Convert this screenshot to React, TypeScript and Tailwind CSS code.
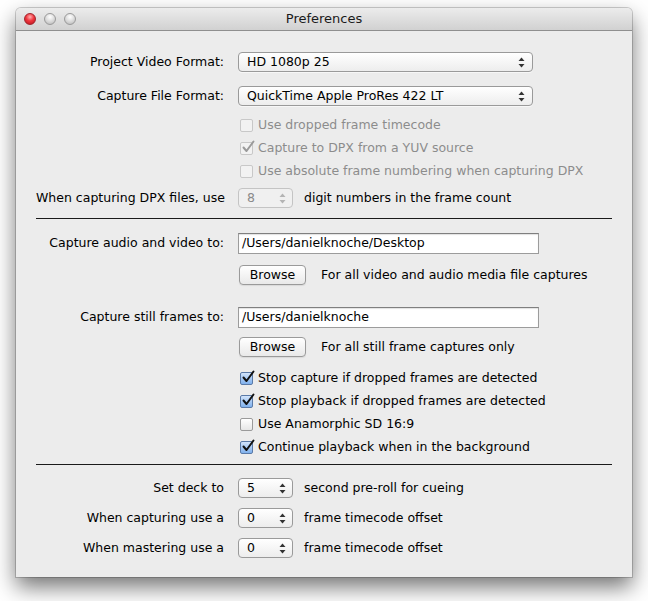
import React from "react";

const font = { fontFamily: '"Lucida Grande", "DejaVu Sans", sans-serif' };

function Arrows({ disabled }: { disabled?: boolean }) {
  const c = disabled ? "#b4b4b4" : "#333";
  return (
    <svg width="7" height="11" viewBox="0 0 7 11" className="shrink-0">
      <path d="M3.5 0.5 L6.5 4 L0.5 4 Z" fill={c} />
      <path d="M3.5 10.5 L6.5 7 L0.5 7 Z" fill={c} />
    </svg>
  );
}

function Popup({ value }: { value: string }) {
  return (
    <div className="flex h-[20px] w-[295px] items-center justify-between rounded-[4px] border border-[#9a9a9a] bg-gradient-to-b from-[#ffffff] to-[#ededed] pl-[8px] pr-[7px] text-black shadow-[0_1px_0_rgba(255,255,255,0.6)]">
      <span>{value}</span>
      <Arrows />
    </div>
  );
}

function Stepper({ value, disabled }: { value: string; disabled?: boolean }) {
  return (
    <div
      className={`flex h-[20px] w-[55px] shrink-0 items-center justify-between rounded-[4px] border pl-[8px] pr-[6px] ${
        disabled
          ? "border-[#c4c4c4] bg-[#f0f0f0] text-[#8a8a8a]"
          : "border-[#9a9a9a] bg-gradient-to-b from-[#ffffff] to-[#ededed] text-black"
      }`}
    >
      <span>{value}</span>
      <Arrows disabled={disabled} />
    </div>
  );
}

function Check({ checked, disabled }: { checked?: boolean; disabled?: boolean }) {
  const box = disabled
    ? "border-[#c8c8c8] bg-[#f2f2f2]"
    : checked
    ? "border-[#5a7aa8] bg-gradient-to-b from-[#d2e4fb] to-[#7fb0ec]"
    : "border-[#9a9a9a] bg-gradient-to-b from-[#ffffff] to-[#e6e6e6]";
  return (
    <div className={`relative h-[13px] w-[13px] shrink-0 rounded-[2px] border ${box}`}>
      {checked && (
        <svg
          width="14"
          height="14"
          viewBox="0 0 14 14"
          className="absolute left-[0px] top-[-3px]"
        >
          <path
            d="M2.5 7.5 L5.5 11 L12.5 1.5"
            fill="none"
            stroke={disabled ? "#9a9a9a" : "#111"}
            strokeWidth="2"
            strokeLinecap="round"
            strokeLinejoin="round"
          />
        </svg>
      )}
    </div>
  );
}

function CheckRow({
  label,
  checked,
  disabled,
}: {
  label: string;
  checked?: boolean;
  disabled?: boolean;
}) {
  return (
    <div className="flex h-[23px] items-center pl-[204px]">
      <div className="flex items-center gap-[5px]">
        <Check checked={checked} disabled={disabled} />
        <span className={disabled ? "text-[#8c8c8c]" : "text-black"}>{label}</span>
      </div>
    </div>
  );
}

function Label({ children }: { children: React.ReactNode }) {
  return <div className="w-[188px] shrink-0 whitespace-nowrap text-right">{children}</div>;
}

function Browse() {
  return (
    <div className="flex h-[20px] w-[67px] shrink-0 items-center justify-center rounded-[4px] border border-[#9a9a9a] bg-gradient-to-b from-[#ffffff] to-[#e9e9e9] text-black shadow-[0_1px_1px_rgba(0,0,0,0.08)]">
      Browse
    </div>
  );
}

function TextField({ value }: { value: string }) {
  return (
    <div className="flex h-[21px] w-[301px] items-center border border-[#9c9c9c] border-t-[#7f7f7f] bg-white pl-[3px] text-black shadow-[inset_0_1px_1px_rgba(0,0,0,0.12)]">
      {value}
    </div>
  );
}

function StepRow({
  label,
  value,
  after,
  disabled,
  className,
}: {
  label: string;
  value: string;
  after: string;
  disabled?: boolean;
  className: string;
}) {
  return (
    <div className={`flex items-center ${className}`}>
      <Label>{label}</Label>
      <div className="ml-[14px]">
        <Stepper value={value} disabled={disabled} />
      </div>
      <span className="ml-[11px] whitespace-nowrap">{after}</span>
    </div>
  );
}

export default function App() {
  return (
    <div className="h-[601px] w-[648px] bg-white pt-[8px]" style={font}>
      <div className="mx-[16px] w-[616px] overflow-hidden rounded-t-[5px] bg-[#ececec] shadow-[0_10px_22px_rgba(0,0,0,0.55),0_0_0_1px_rgba(0,0,0,0.18)]">
        {/* title bar */}
        <div className="relative flex h-[23px] items-center justify-center border-b border-[#8f8f8f] bg-gradient-to-b from-[#ececec] to-[#d1d1d1]">
          <div className="absolute left-[8px] top-[5px] flex gap-[8px]">
            <div className="h-[12px] w-[12px] rounded-full border border-[#a0232b] bg-[radial-gradient(circle_at_50%_30%,#ffb0b0_0%,#f0373f_45%,#b8141c_100%)]" />
            <div className="h-[12px] w-[12px] rounded-full border border-[#9a9a9a] bg-[radial-gradient(circle_at_50%_30%,#ffffff_0%,#d8d8d8_55%,#b4b4b4_100%)]" />
            <div className="h-[12px] w-[12px] rounded-full border border-[#9a9a9a] bg-[radial-gradient(circle_at_50%_30%,#ffffff_0%,#d8d8d8_55%,#b4b4b4_100%)]" />
          </div>
          <span className="text-[13px] text-[#1a1a1a]">Preferences</span>
        </div>

        {/* content */}
        <div className="px-[20px] pb-[19px] text-[12.5px] text-black">
          <div className="mt-[21px] flex items-center gap-[14px]">
            <Label>Project Video Format:</Label>
            <Popup value="HD 1080p 25" />
          </div>
          <div className="mt-[14px] flex items-center gap-[14px]">
            <Label>Capture File Format:</Label>
            <Popup value="QuickTime Apple ProRes 422 LT" />
          </div>

          <div className="mt-[8px]">
            <CheckRow label="Use dropped frame timecode" disabled />
            <CheckRow label="Capture to DPX from a YUV source" checked disabled />
            <CheckRow label="Use absolute frame numbering when capturing DPX" disabled />
          </div>

          <StepRow
            className="mt-[5px]"
            label="When capturing DPX files, use"
            value="8"
            disabled
            after="digit numbers in the frame count"
          />

          <div className="mt-[10px] h-px bg-[#1a1a1a]" />

          <div className="mt-[14px] flex items-center gap-[14px]">
            <Label>Capture audio and video to:</Label>
            <TextField value="/Users/danielknoche/Desktop" />
          </div>
          <div className="mt-[11px] flex items-center gap-[15px] pl-[203px]">
            <Browse />
            <span>For all video and audio media file captures</span>
          </div>

          <div className="mt-[22px] flex items-center gap-[14px]">
            <Label>Capture still frames to:</Label>
            <TextField value="/Users/danielknoche" />
          </div>
          <div className="mt-[9px] flex items-center gap-[15px] pl-[203px]">
            <Browse />
            <span>For all still frame captures only</span>
          </div>

          <div className="mt-[10px]">
            <CheckRow label="Stop capture if dropped frames are detected" checked />
            <CheckRow label="Stop playback if dropped frames are detected" checked />
            <CheckRow label="Use Anamorphic SD 16:9" />
            <CheckRow label="Continue playback when in the background" checked />
          </div>

          <div className="mt-[5px] h-px bg-[#1a1a1a]" />

          <StepRow
            className="mt-[13px]"
            label="Set deck to"
            value="5"
            after="second pre-roll for cueing"
          />
          <StepRow
            className="mt-[10px]"
            label="When capturing use a"
            value="0"
            after="frame timecode offset"
          />
          <StepRow
            className="mt-[10px]"
            label="When mastering use a"
            value="0"
            after="frame timecode offset"
          />
        </div>
      </div>
    </div>
  );
}
